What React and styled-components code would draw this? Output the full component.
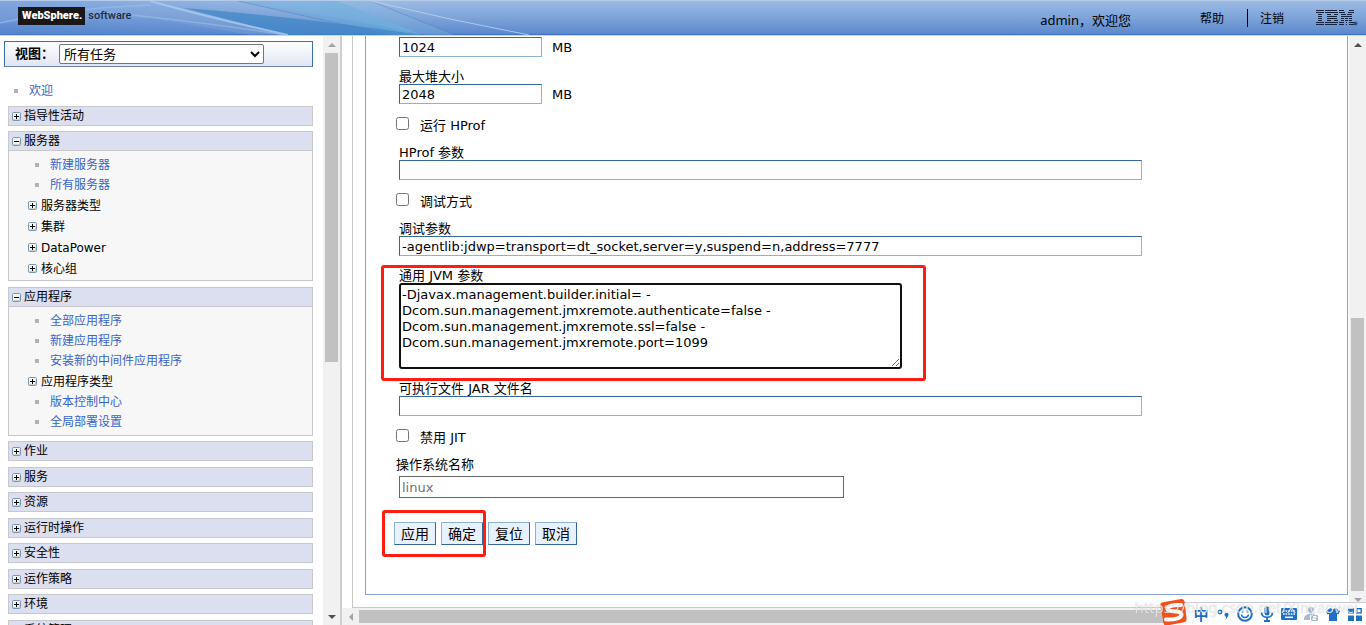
import React from 'react';
import styled, { createGlobalStyle, css } from 'styled-components';

const GlobalStyle = createGlobalStyle`
  * {
    box-sizing: border-box;
  }
  body {
    margin: 0;
    overflow: hidden;
    background: #fff;
    color: #000;
    font-family: "DejaVu Sans", "Noto Sans CJK SC", sans-serif;
    font-size: 13px;
  }
  a {
    text-decoration: none;
  }
`;

const Page = styled.div`
  display: flex;
  flex-direction: column;
  height: 100vh;
`;

/* banner */

const Banner = styled.header`
  position: relative;
  display: flex;
  align-items: center;
  flex: none;
  height: 36px;
  padding: 0 8px 0 18px;
  border-top: 1px solid #b4cbea;
  border-bottom: 1px solid #d0d4dc;
  background: linear-gradient(#9dbbe3, #7da3d9 50%, #5c89cd 96%, #3f75c4 97%);
`;
const BannerArt = styled.svg`
  position: absolute;
  left: 0;
  top: 0;
  width: 540px;
  height: 34px;
`;
const Brand = styled.div`
  position: relative;
  display: flex;
  align-items: center;
  gap: 3px;
  margin-right: auto;
  padding-bottom: 4px;
  font-family: Roboto, sans-serif;
  font-size: 11px;
  font-weight: 500;
  line-height: 18px;
  color: #1e2b45;
`;
const BrandBox = styled.strong`
  padding: 0 3px 0 4px;
  background: #1a1718;
  color: #fff;
  font-weight: 900;
`;
const Welcome = styled.span`
  margin-right: 69px;
  padding-top: 2px;
  font-family: "Noto Sans", "Noto Sans CJK SC", sans-serif;
  font-size: 13px;
`;
const BannerLink = styled.a`
  padding-top: 2px;
  color: #000;
  font-size: 12px;
  line-height: 16px;
  & + & {
    margin-left: 23px;
    padding-left: 12px;
    border-left: 1px solid #000;
  }
`;
const IbmLogo = styled.svg`
  width: 42px;
  height: 16px;
  margin-left: 32px;
`;

/* frames */

const Frames = styled.div`
  display: flex;
  flex: 1;
  min-height: 0;
`;
const NavFrame = styled.div`
  display: flex;
  flex: none;
  width: 342px;
  border-right: 2px solid #cfcfcf;
`;
const Nav = styled.nav`
  flex: 1;
  overflow: hidden;
  padding: 5px 10px 0 4px;
`;
const MainFrame = styled.div`
  display: flex;
  flex: 1;
  flex-direction: column;
  min-width: 0;
`;
const MainRow = styled.div`
  display: flex;
  flex: 1;
  min-height: 0;
`;

const Bar = styled.div`
  display: flex;
  flex: none;
  flex-direction: ${(p) => (p.$horizontal ? 'row' : 'column')};
  ${(p) => (p.$horizontal ? 'height: 17px;' : 'width: 17px;')}
  background: #f1f1f1;
`;
const ArrowCell = styled.span`
  display: flex;
  align-items: center;
  justify-content: center;
  flex: none;
  width: 17px;
  height: 17px;
`;
const Space = styled.span`
  flex: ${(p) => p.$grow};
`;
const Thumb = styled.span`
  flex: ${(p) => p.$grow};
  margin: ${(p) => (p.$horizontal ? '2px 0' : '0 2px')};
  background: #c1c1c1;
`;

const ARROWS = {
  up: 'M0 6 4 2 8 6Z',
  down: 'M0 2 4 6 8 2Z',
  left: 'M6 0 2 4 6 8Z',
  right: 'M2 0 6 4 2 8Z',
};

function Arrow({ dir, color }) {
  return (
    <ArrowCell>
      <svg width="8" height="8" aria-hidden="true">
        <path d={ARROWS[dir]} fill={color} />
      </svg>
    </ArrowCell>
  );
}

function ScrollBar({ horizontal, before, thumb, after, startColor = '#505050', endColor = '#505050' }) {
  return (
    <Bar $horizontal={horizontal} aria-hidden="true">
      <Arrow dir={horizontal ? 'left' : 'up'} color={startColor} />
      <Space $grow={before} />
      <Thumb $grow={thumb} $horizontal={horizontal} />
      <Space $grow={after} />
      <Arrow dir={horizontal ? 'right' : 'down'} color={endColor} />
    </Bar>
  );
}

/* navigation */

const ViewBox = styled.div`
  display: flex;
  align-items: center;
  height: 26px;
  padding-left: 10px;
  border: 1px solid #3a6ea9;
  border-bottom-color: #6c86b0;
  background: linear-gradient(#fff, #e1e5f3);
`;
const ViewLabel = styled.label`
  width: 44px;
  font-size: 13px;
  font-weight: bold;
  line-height: 18px;
`;
const ViewSelect = styled.select`
  width: 205px;
  height: 20px;
  padding: 0;
  border: 1px solid #767676;
  border-radius: 2px;
  background-color: #fff;
  color: #000;
  font-family: inherit;
  font-size: 13px;
`;
const Tree = styled.div`
  margin-left: 4px;
`;
const Section = styled.section`
  margin-bottom: 5px;
  border: 1px solid #c8c8cc;
  background: #f7f7f7;
  &:nth-of-type(even) {
    margin-bottom: 6px;
  }
`;
const navButton = css`
  display: flex;
  align-items: center;
  gap: 3px;
  width: 100%;
  border: 0;
  color: #000;
  font-family: inherit;
  font-size: 12px;
  line-height: 18px;
  text-align: left;
`;
const SectionHead = styled.button`
  ${navButton}
  height: 18px;
  padding: 0 3px;
  background: #dcdfef;
`;
const SectionBody = styled.div`
  min-height: 129px;
  padding: 4px 0 1px;
  border-top: 1px solid #c8c8cc;
`;
const SubGroup = styled.button`
  ${navButton}
  gap: 4px;
  height: 21px;
  padding: 0 0 0 19px;
  background: none;
`;
const NavLink = styled.a`
  display: flex;
  align-items: center;
  gap: 11px;
  height: 20px;
  padding-left: ${(p) => (p.$root ? '6px' : '26px')};
  color: #3764c8;
  font-size: 12px;
  line-height: 20px;
  &::before {
    content: "";
    width: 4px;
    height: 4px;
    background: #b2b2b2;
  }
`;
const RootItem = styled.div`
  padding: 14px 0 5px;
`;

function Toggle({ open }) {
  return (
    <svg width="9" height="9" aria-hidden="true">
      <rect x="0.5" y="0.5" width="8" height="8" rx="1" fill="#f4f4ef" stroke="#7895b2" />
      <path d="M1 7.5h7M7.5 4v4" stroke="#d2cfc5" />
      <path d={open ? 'M2 4.5h5' : 'M2 4.5h5M4.5 2v5'} stroke="#000" />
    </svg>
  );
}

const SECTIONS = [
  { title: '指导性活动' },
  {
    title: '服务器',
    items: [
      { link: '新建服务器' },
      { link: '所有服务器' },
      { group: '服务器类型' },
      { group: '集群' },
      { group: 'DataPower' },
      { group: '核心组' },
    ],
  },
  {
    title: '应用程序',
    items: [
      { link: '全部应用程序' },
      { link: '新建应用程序' },
      { link: '安装新的中间件应用程序' },
      { group: '应用程序类型' },
      { link: '版本控制中心' },
      { link: '全局部署设置' },
    ],
  },
  { title: '作业' },
  { title: '服务' },
  { title: '资源' },
  { title: '运行时操作' },
  { title: '安全性' },
  { title: '运作策略' },
  { title: '环境' },
  { title: '系统管理' },
];

function NavSection({ title, items }) {
  return (
    <Section>
      <SectionHead type="button" aria-expanded={!!items}>
        <Toggle open={!!items} />
        {title}
      </SectionHead>
      {items && (
        <SectionBody>
          {items.map((item) =>
            item.link ? (
              <NavLink key={item.link} href="#">
                {item.link}
              </NavLink>
            ) : (
              <SubGroup key={item.group} type="button" aria-expanded="false">
                <Toggle />
                {item.group}
              </SubGroup>
            )
          )}
        </SectionBody>
      )}
    </Section>
  );
}

/* form */

const Portlet = styled.main`
  flex: 1;
  min-width: 0;
  margin-left: 10px;
  padding: 0 1px 12px 12px;
  border-left: 1px solid #c8c8c8;
  border-bottom: 1px solid #c8c8c8;
`;
const Panel = styled.form`
  height: 100%;
  padding: 1px 0 0 28px;
  border: solid #86a2d4;
  border-width: 0 1px 1px;
`;
const Field = styled.div`
  position: relative;
  width: fit-content;
  max-width: 100%;
  margin: 0 0 11px 5px;
`;
const FieldLabel = styled.label`
  display: block;
  height: 16px;
  line-height: 18px;
  white-space: nowrap;
`;
const Control = styled.div`
  display: flex;
  align-items: center;
  gap: 10px;
`;
const TextInput = styled.input`
  width: ${(p) => (p.$short ? '143px' : '743px')};
  max-width: 100%;
  height: 20px;
  padding: 1px 2px;
  border: 1px solid;
  border-color: #336699 #8cb1d1 #8cb1d1 #336699;
  border-radius: 0;
  background: #fff;
  color: #000;
  font-family: inherit;
  font-size: 13px;
`;
const OsInput = styled(TextInput)`
  width: 445px;
  height: 22px;
  border-color: #666;
  color: #707070;
`;
const JvmArgs = styled.textarea`
  display: block;
  width: 503px;
  padding: 2px 1px 0;
  border: 2px solid #101010;
  border-radius: 3px;
  outline: none;
  color: #000;
  font-family: inherit;
  font-size: 13px;
  line-height: 16px;
`;
const CheckRow = styled.div`
  display: flex;
  gap: 11px;
  height: 20px;
  margin: 0 0 9px 2px;
  line-height: 22px;
`;
const CheckBox = styled.input`
  width: 13px;
  height: 13px;
  margin: 2px 0 0;
`;
const OsLabel = styled(FieldLabel)`
  height: 20px;
  margin-left: 2px;
`;
const highlight = css`
  &::after {
    content: "";
    position: absolute;
    border: 3px solid #ff1d12;
    border-radius: 3px;
    pointer-events: none;
  }
`;
const MarkedField = styled(Field)`
  ${highlight}
  &::after {
    inset: -2px -24px -12px -18px;
  }
`;
const Buttons = styled.div`
  display: flex;
  gap: 5px;
  padding-top: 13px;
`;
const MarkedButtons = styled.div`
  position: relative;
  display: flex;
  gap: 5px;
  ${highlight}
  &::after {
    inset: -12px -3px -12px -12px;
  }
`;
const FormButton = styled.button`
  width: 42px;
  height: 23px;
  padding: 0;
  border: 1px solid;
  border-color: #8cb1d1 #336699 #336699 #8cb1d1;
  background: #e8f1ff;
  color: #000;
  font-family: inherit;
  font-size: 14px;
  line-height: 20px;
`;

function Text({ id, label, unit, value = '' }) {
  return (
    <Field>
      {label && <FieldLabel htmlFor={id}>{label}</FieldLabel>}
      <Control>
        <TextInput
          id={id}
          type="text"
          $short={!!unit}
          defaultValue={value}
          aria-label={label ? undefined : unit}
        />
        {unit}
      </Control>
    </Field>
  );
}

function Check({ id, label }) {
  return (
    <CheckRow>
      <CheckBox id={id} type="checkbox" />
      <label htmlFor={id}>{label}</label>
    </CheckRow>
  );
}

const JVM_ARGS =
  '-Djavax.management.builder.initial= -Dcom.sun.management.jmxremote.authenticate=false ' +
  '-Dcom.sun.management.jmxremote.ssl=false -Dcom.sun.management.jmxremote.port=1099';

/* input method bar floating over the window corner */

const ImeBar = styled.div`
  position: fixed;
  right: 0;
  bottom: 0;
  display: flex;
  align-items: center;
  height: 23px;
  padding-left: 25px;
  border-top: 1px solid #c9c9d4;
  background: #fff;
`;
const ImeButton = styled.button`
  display: flex;
  align-items: center;
  justify-content: center;
  width: 22px;
  height: 22px;
  padding: 0;
  border: 0;
  background: none;
  color: #1f70c4;
  font: bold 15px/20px "Noto Sans CJK SC", sans-serif;
`;
const ImeLogo = styled.svg`
  position: absolute;
  left: -6px;
  bottom: -1px;
  width: 30px;
  height: 28px;
`;
const Watermark = styled.span`
  position: fixed;
  right: 8px;
  bottom: 8px;
  color: rgba(255, 255, 255, 0.7);
  font-family: "Noto Sans", sans-serif;
  font-size: 15px;
  line-height: 20px;
  text-shadow: 0 0 1px rgba(120, 120, 120, 0.5);
  pointer-events: none;
`;

function Ime() {
  const blue = '#1f70c4';
  return (
    <ImeBar>
      <ImeLogo viewBox="0 0 30 28" aria-hidden="true">
        <path d="M3 4.500 22 1q3-.5 3.600 2.500l2 17q.3 3-2.600 3.700L8 27.500q-3 .5-3.500-2.500L1.500 8Q1 5 3 4.500Z" fill="#f4501e" />
        <path
          d="M22 7C15 6.500 8 8 8.500 11.500c.5 3 13.500 0 14 5 .3 4-8 5.500-15.500 5"
          fill="none"
          stroke="#fff"
          strokeWidth="4"
          strokeLinecap="round"
        />
      </ImeLogo>
      <ImeButton type="button">中</ImeButton>
      <ImeButton type="button" aria-label="标点">
        <svg width="14" height="14">
          <circle cx="4" cy="5" r="1.700" fill="none" stroke={blue} strokeWidth="1.500" />
          <path d="M8.500 7.500a2 2 0 1 1 3.600 1.300Q11.500 11.500 9 13q1.400-2 1-3.200-1.500-.5-1.500-2.300Z" fill={blue} />
        </svg>
      </ImeButton>
      <ImeButton type="button" aria-label="表情">
        <svg width="16" height="16" fill="none" stroke={blue} strokeWidth="2">
          <circle cx="8" cy="8" r="6.800" />
          <path d="M4.500 8.500c.5 4 6.500 4 7 0" strokeWidth="1.600" />
          <path d="M5.700 4.500v2.500M10.300 4.500v2.500" strokeWidth="1.700" />
        </svg>
      </ImeButton>
      <ImeButton type="button" aria-label="语音">
        <svg width="14" height="16" fill={blue}>
          <rect x="4.500" y="0.500" width="5" height="9" rx="2.500" />
          <path d="M1.500 6.500c0 6.500 11 6.500 11 0M7 11.500V15M4 15h6" fill="none" stroke={blue} strokeWidth="1.800" />
        </svg>
      </ImeButton>
      <ImeButton type="button" aria-label="键盘">
        <svg width="16" height="12">
          <rect width="16" height="12" rx="1" fill={blue} />
          <path d="M2 3h12M2 6h12" stroke="#fff" strokeWidth="1.600" strokeDasharray="1.600 1" />
          <path d="M4 9.300h8" stroke="#fff" strokeWidth="1.500" />
        </svg>
      </ImeButton>
      <ImeButton type="button" aria-label="账号">
        <svg width="16" height="16" fill="#a9b9d2">
          <circle cx="8" cy="4" r="3" />
          <path d="M1 13q0-5 7-5.500 3 0 4 1.500H7v5H1Z" />
          <rect x="8" y="9" width="7" height="6" rx="1" />
          <path d="M10 10.500h3v1.500h-3v1.500h3" fill="none" stroke="#fff" />
        </svg>
      </ImeButton>
      <ImeButton type="button" aria-label="皮肤">
        <svg width="14" height="14" fill={blue}>
          <path d="M4.500 1q2.500 2 5 0L14 4l-1.500 3.500L11 7v7H3V7l-1.500.5L0 4Z" />
        </svg>
      </ImeButton>
      <ImeButton type="button" aria-label="工具">
        <svg width="14" height="13" fill={blue}>
          <rect width="6" height="5.500" />
          <rect x="8.700" y="0.700" width="4.500" height="4.200" fill="none" stroke={blue} strokeWidth="1.400" />
          <rect y="7.500" width="6" height="5.500" />
          <rect x="8" y="7.500" width="6" height="5.500" />
        </svg>
      </ImeButton>
      <Watermark>https://blog.csdn.net/Xinyaowei</Watermark>
    </ImeBar>
  );
}

// the eight stripes of the logo, as [x, width] runs
const IBM_STRIPES = [
  [[0, 8], [9, 12], [23, 5], [33, 5]],
  [[0, 8], [9, 13], [23, 6], [32, 6]],
  [[2, 4], [11, 4], [18, 4], [25, 5], [31, 5]],
  [[2, 4], [11, 10], [25, 11]],
  [[2, 4], [11, 10], [25, 3], [29, 3], [33, 3]],
  [[2, 4], [11, 4], [18, 4], [25, 3], [29, 3], [33, 3]],
  [[0, 8], [9, 13], [23, 5], [30, 1], [33, 5]],
  [[0, 8], [9, 12], [23, 5], [30, 1], [33, 5]],
];

function App() {
  return (
    <Page>
      <GlobalStyle />
      <Banner>
        <BannerArt viewBox="0 0 540 34" preserveAspectRatio="none" aria-hidden="true">
          <defs>
            <linearGradient id="wash">
              <stop offset="0" stopColor="#4f7fd0" stopOpacity="0.700" />
              <stop offset="1" stopColor="#4f7fd0" stopOpacity="0" />
            </linearGradient>
            <linearGradient id="sky">
              <stop offset="0" stopColor="#66a5d8" stopOpacity="0.300" />
              <stop offset="1" stopColor="#63b0de" stopOpacity="0.900" />
            </linearGradient>
          </defs>
          <path d="M0 0h300v34H0Z" fill="url(#wash)" opacity="0.600" />
          <path d="M238 0h100l84 34h-38Z" fill="url(#sky)" opacity="0.800" />
          <path d="M184 7Q300 16 422 34H288Z" fill="#3d84c6" opacity="0.700" />
          <path d="M238 0h133l84 34h-30Q330 14 238 0Z" fill="#80b8e0" opacity="0.350" />
          <path d="M153 0 290 34h-40L150 17 0 22V0Z" fill="#8fb0e0" opacity="0.250" />
          <path d="M238 0 390 34M371 0 455 34" fill="none" stroke="#4978b8" opacity="0.400" />
          <path d="M150 0Q215 18 288 34" fill="none" stroke="#a9cdf0" strokeWidth="2" opacity="0.800" />
          <path d="M0 22Q60 8 150 4M100 11Q190 19 285 34" fill="none" stroke="#9ac0ea" strokeWidth="1.500" opacity="0.600" />
          <path d="M371 0Q450 19 529 34" fill="none" stroke="#bcd4f0" opacity="0.800" />
        </BannerArt>
        <Brand>
          <BrandBox>WebSphere.</BrandBox>
          software
        </Brand>
        <Welcome>admin，欢迎您</Welcome>
        <BannerLink href="#">帮助</BannerLink>
        <BannerLink href="#">注销</BannerLink>
        <IbmLogo viewBox="0 0 42 16" fill="#16233f" role="img" aria-label="IBM">
          {IBM_STRIPES.map((runs, row) =>
            runs.map(([x, w]) => <rect key={`${row}-${x}`} x={x} y={row * 2} width={w} height="1" />)
          )}
          <circle cx="39.500" cy="13.500" r="2" fill="#2d4f86" />
        </IbmLogo>
      </Banner>
      <Frames>
        <NavFrame>
          <Nav>
            <ViewBox>
              <ViewLabel htmlFor="view">视图：</ViewLabel>
              <ViewSelect id="view">
                <option>所有任务</option>
              </ViewSelect>
            </ViewBox>
            <Tree>
              <RootItem>
                <NavLink href="#" $root>
                  欢迎
                </NavLink>
              </RootItem>
              {SECTIONS.map((section) => (
                <NavSection key={section.title} {...section} />
              ))}
            </Tree>
          </Nav>
          <ScrollBar before={0} thumb={309} after={246} startColor="#a3a3a3" />
        </NavFrame>
        <MainFrame>
          <MainRow>
            <Portlet>
              <Panel>
                <Text id="initialHeap" unit="MB" value="1024" />
                <Text id="maxHeap" label="最大堆大小" unit="MB" value="2048" />
                <Check id="runHprof" label="运行 HProf" />
                <Text id="hprofArgs" label="HProf 参数" />
                <Check id="debugMode" label="调试方式" />
                <Text
                  id="debugArgs"
                  label="调试参数"
                  value="-agentlib:jdwp=transport=dt_socket,server=y,suspend=n,address=7777"
                />
                <MarkedField>
                  <FieldLabel htmlFor="jvmArgs">通用 JVM 参数</FieldLabel>
                  <JvmArgs id="jvmArgs" rows={5} defaultValue={JVM_ARGS} spellCheck={false} />
                </MarkedField>
                <Text id="jarName" label="可执行文件 JAR 文件名" />
                <Check id="disableJit" label="禁用 JIT" />
                <OsLabel htmlFor="osName">操作系统名称</OsLabel>
                <Field>
                  <Control>
                    <OsInput id="osName" type="text" defaultValue="linux" disabled />
                  </Control>
                </Field>
                <Buttons>
                  <MarkedButtons>
                    <FormButton type="button">应用</FormButton>
                    <FormButton type="button">确定</FormButton>
                  </MarkedButtons>
                  <FormButton type="button">复位</FormButton>
                  <FormButton type="button">取消</FormButton>
                </Buttons>
              </Panel>
            </Portlet>
            <ScrollBar before={265} thumb={273} after={0} endColor="#a3a3a3" />
          </MainRow>
          <ScrollBar horizontal before={0} thumb={900} after={90} startColor="#a3a3a3" />
        </MainFrame>
      </Frames>
      <Ime />
    </Page>
  );
}

export default App;
